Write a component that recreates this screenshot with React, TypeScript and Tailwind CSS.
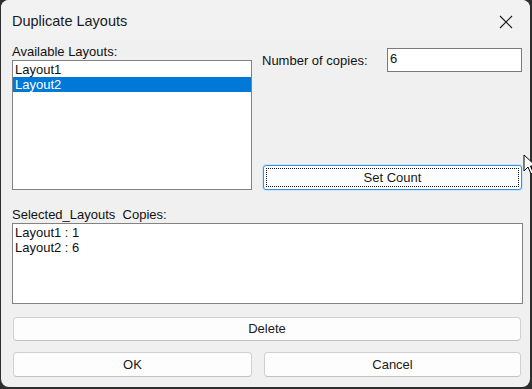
import React from 'react';

const font = { fontFamily: '"Liberation Sans", Arial, sans-serif' };

const CloseIcon = () => (
  <svg width="14" height="14" viewBox="0 0 14 14" fill="none">
    <path d="M1 1 L13 13 M13 1 L1 13" stroke="#1b1b1b" strokeWidth="1.1" />
  </svg>
);

const Cursor = () => (
  <svg width="14" height="22" viewBox="0 0 14 22">
    <path
      d="M1 1 L1 17 L5 13 L8 20 L10.5 19 L7.5 12 L13 12 Z"
      fill="#ffffff"
      stroke="#000000"
      strokeWidth="1"
      strokeLinejoin="round"
    />
  </svg>
);

const Button = ({ label, className = '' }: { label: string; className?: string }) => (
  <button
    className={`flex items-center justify-center rounded-[4px] border border-[#d0d0d0] border-b-[#c2c2c2] bg-[#fdfdfd] text-[13px] text-[#1a1a1a] ${className}`}
  >
    {label}
  </button>
);

export default function App() {
  const available = ['Layout1', 'Layout2'];
  const selected = ['Layout1 : 1', 'Layout2 : 6'];

  return (
    <div className="w-[532px] h-[389px] overflow-hidden bg-[#2e2e2e]" style={font}>
      <div className="relative ml-[1px] w-[529px] h-[387px] rounded-[8px] bg-[#f0f0f0] flex flex-col">
        {/* title bar */}
        <div className="h-[40px] flex items-center justify-between pl-[11px] pr-[17px] pt-[4px] rounded-t-[8px] bg-[#f2f2f2]">
          <span className="text-[14.5px] text-[#1a1a1a]">Duplicate Layouts</span>
          <CloseIcon />
        </div>

        <div className="flex flex-col pl-[11px] pr-[7px] text-[13px] text-[#111]">
          <div className="flex gap-[10px]">
            <div className="flex flex-col w-[240px]">
              <div className="mt-[4px] h-[16px] leading-[16px]">Available Layouts:</div>
              <div className="h-[130px] border border-[#828282] bg-white pt-[1px]">
                {available.map((item, i) => (
                  <div
                    key={item}
                    className={`h-[15px] leading-[15px] pl-[2px] ${i === 1 ? 'bg-[#0078d7] text-white' : ''}`}
                  >
                    {item}
                  </div>
                ))}
              </div>
            </div>

            <div className="flex flex-col justify-between flex-1 mt-[8px] h-[142px]">
              <div className="flex items-center">
                <span className="w-[125px] pt-[1px]">Number of copies:</span>
                <div className="w-[135px] h-[24px] border border-[#7a7a7a] bg-white pl-[2px] leading-[20px]">
                  6
                </div>
              </div>
              <button className="ml-[1px] mr-[1px] h-[25px] rounded-[3px] border border-[#3c8ede] bg-[#fbfdff] shadow-[0_0_0_1px_#cce4f7] p-[2px]">
                <div className="h-full flex items-center justify-center border border-dotted border-[#111] text-[13px] text-[#1a1a1a]">
                  Set Count
                </div>
              </button>
            </div>
          </div>

          <div className="mt-[17px] h-[16px] leading-[16px]">Selected_Layouts&nbsp; Copies:</div>
          <div className="h-[81px] border border-[#828282] bg-white pt-[1px]">
            {selected.map(item => (
              <div key={item} className="h-[15px] leading-[15px] pl-[2px]">
                {item}
              </div>
            ))}
          </div>

          <Button label="Delete" className="mt-[13px] ml-[1px] mr-[2px] h-[24px]" />

          <div className="mt-[11px] ml-[1px] mr-[2px] flex gap-[12px]">
            <Button label="OK" className="w-[239px] h-[25px]" />
            <Button label="Cancel" className="flex-1 h-[25px]" />
          </div>
        </div>

        <div className="absolute left-[522px] top-[154px]">
          <Cursor />
        </div>
      </div>
    </div>
  );
}
